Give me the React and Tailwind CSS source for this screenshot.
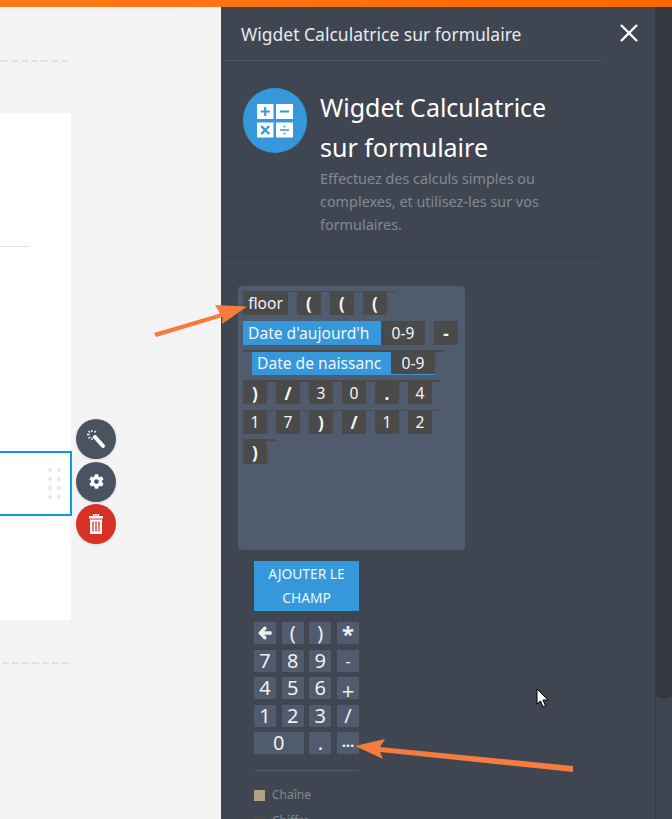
import { FaCog, FaArrowLeft } from "react-icons/fa";

function Dashes() {
  return (
    <div className="flex gap-[3px] pl-[1px]">
      {[0, 1, 2, 3, 4, 5, 6].map((i) => (
        <span key={i} className="h-[2px] w-[7px] bg-[#e2e2e2]" />
      ))}
    </div>
  );
}

function Token({ children, bold, w = "w-[24px]" }) {
  return (
    <span className={`mr-[9px] flex h-full items-center justify-center bg-[#4a4a4a] pt-px text-[#f5f5f5] ${w} ${bold ? "text-[17px] font-bold" : "text-[15.600px]"}`}>
      {children}
    </span>
  );
}

function FieldToken({ children, w }) {
  return (
    <span className={`flex h-full items-center bg-[#3498db] pt-px pl-[5px] text-[15.600px] whitespace-nowrap text-[#f5f5f5] ${w}`}>
      {children}
    </span>
  );
}

function Key({ children, wide, size = "text-[20px] leading-none" }) {
  return (
    <span className={`flex h-[22px] items-center justify-center bg-[#505b6d] text-[#f0f0f0] ${size} ${wide ? "col-span-2" : ""}`}>
      {children}
    </span>
  );
}

function CalcIcon() {
  return (
    <div className="flex h-[65px] w-[64px] shrink-0 items-center justify-center rounded-full bg-[#3498db]">
      <svg width="36" height="34" viewBox="0 0 36 34">
        <rect x="0" y="0" width="16.500" height="15" fill="#fff" />
        <rect x="19" y="0" width="17" height="15" fill="#fff" />
        <rect x="0" y="18.500" width="16.500" height="15" fill="#fff" />
        <rect x="19" y="18.500" width="17" height="15" fill="#fff" />
        <path d="M8.200 3v9M3.700 7.500h9M23 7.500h9" stroke="#3498db" strokeWidth="2" />
        <path d="M4.200 22l8 8M12.200 22l-8 8" stroke="#3498db" strokeWidth="2.400" />
        <path d="M23 26h9" stroke="#3498db" strokeWidth="1.500" />
        <circle cx="27.500" cy="22.500" r="1" fill="#3498db" />
        <circle cx="27.500" cy="29.500" r="1" fill="#3498db" />
      </svg>
    </div>
  );
}

function WandIcon() {
  return (
    <svg width="20" height="20" viewBox="0 0 20 20">
      <path d="M9 8l8 9" stroke="#fff" strokeWidth="4" strokeLinecap="round" />
      <path d="M6 1v2M1 5.500h2.500M2.500 2l1.500 1.500M10 2L8.500 3.500M2.500 9.500L4 8M6 8.500v2.500" stroke="#fff" strokeWidth="1.300" />
    </svg>
  );
}

function TrashIcon() {
  return (
    <svg width="14" height="20" viewBox="0 0 14 20">
      <path d="M4.500 2V.8h5V2" fill="none" stroke="#fff" strokeWidth="1.200" />
      <rect x="0" y="2" width="14" height="2.500" fill="#fff" />
      <path d="M1 5.500h12V20H1Z" fill="#fff" />
      <path d="M4 7.500v10M7 7.500v10M10 7.500v10" stroke="#d93025" strokeWidth="1.300" />
    </svg>
  );
}

export default function App() {
  return (
    <div className="relative flex h-[819px] w-[672px] flex-col overflow-hidden font-['Noto_Sans',sans-serif]">
      <div className="h-[7px] shrink-0 bg-gradient-to-r from-[#ff7a14] to-[#ff6600]" />
      <div className="flex min-h-0 flex-1">
        {/* canvas du formulaire */}
        <div className="w-[221px] shrink-0 bg-[#f4f4f4] pt-[53px]">
          <Dashes />
          <div className="relative mt-[51px] h-[507px] w-[71px] bg-white pt-[133px]">
            <div className="h-px w-[30px] bg-[#e4e4e4]" />
            <div className="mt-[204px] flex h-[65px] w-[72px] items-center justify-end border-y-2 border-r-2 border-[#0a9be8] pr-[9px]">
              <div className="grid grid-cols-2 gap-x-[5px] gap-y-[5px]">
                {[0, 1, 2, 3, 4, 5, 6, 7].map((i) => (
                  <span key={i} className="size-[4px] rounded-full bg-[#e8e8e8]" />
                ))}
              </div>
            </div>
            <div className="absolute top-[306px] left-[76px] flex flex-col gap-[2.500px]">
              <span className="flex size-[40px] items-center justify-center rounded-full bg-[#4a5460] text-white shadow-sm"><WandIcon /></span>
              <span className="flex size-[40px] items-center justify-center rounded-full bg-[#4a5460] text-[15px] text-white shadow-sm"><FaCog /></span>
              <span className="flex size-[40px] items-center justify-center rounded-full bg-[#d93025] text-white shadow-sm"><TrashIcon /></span>
            </div>
          </div>
          <div className="mt-[42px] pl-[1px]">
            <Dashes />
          </div>
        </div>

        {/* panneau du widget */}
        <div className="relative flex min-w-0 flex-1 bg-[#3f4651]">
          <div className="w-[381px] shrink-0">
            <div className="flex h-[54px] items-center border-b border-[#4a5866] pt-[2px] pl-[20px] text-[17.500px] text-[#e8eaec]">
              Wigdet Calculatrice sur formulaire
            </div>
            <div className="flex h-[197px] gap-[13px] border-b border-[#353b44] pt-[27px] pl-[22px]">
              <CalcIcon />
              <div>
                <h1 className="text-[25px] leading-[39.500px] font-normal text-white">Wigdet Calculatrice<br />sur formulaire</h1>
                <p className="text-[14.400px] leading-[23px] text-[#808996]">
                  Effectuez des calculs simples ou<br />complexes, et utilisez-les sur vos<br />formulaires.
                </p>
              </div>
            </div>
            <div className="mt-[28px] ml-[17px] h-[264px] w-[227px] rounded-[4px] bg-[#505b6d] pt-px pl-[5px]">
              <div className="mt-[4px] flex h-[24px] w-fit border-t border-[#4a4a4a]">
                <Token w="w-[45px]">floor</Token>
                <Token bold>(</Token>
                <Token bold>(</Token>
                <Token bold>(</Token>
              </div>
              <div className="mt-[6px] flex h-[24px] w-fit">
                <FieldToken w="w-[138px]">Date d'aujourd'h</FieldToken>
                <Token w="w-[44px]">0-9</Token>
                <Token bold>-</Token>
              </div>
              <div className="mt-[5px] flex h-[25px] w-fit border-t-2 border-[#4a4a4a] pl-[9px]">
                <FieldToken w="w-[139px]">Date de naissanc</FieldToken>
                <span className="mr-[9px] border-b border-[#3498db]">
                  <Token w="w-[44px] !mr-0">0-9</Token>
                </span>
              </div>
              <div className="mt-[5px] flex h-[24px] w-fit border-t-2 border-[#4a4a4a]">
                <Token bold>)</Token>
                <Token bold>/</Token>
                <Token>3</Token>
                <Token>0</Token>
                <Token bold>.</Token>
                <Token>4</Token>
              </div>
              <div className="mt-[6px] flex h-[24px] w-fit border-t border-[#4a4a4a]">
                <Token>1</Token>
                <Token>7</Token>
                <Token bold>)</Token>
                <Token bold>/</Token>
                <Token>1</Token>
                <Token>2</Token>
              </div>
              <div className="mt-[5px] flex h-[25px] w-fit border-t-2 border-[#4a4a4a]">
                <Token bold>)</Token>
              </div>
            </div>
            <div className="mt-[11px] ml-[33px] w-[105px]">
              <div className="bg-[#3498db] py-[1px] text-center text-[13.800px] leading-[24px] text-[#f0f6fb]">
                AJOUTER LE<br />CHAMP
              </div>
              <div className="mt-[11px] grid grid-cols-[22px_22px_22px_22px] justify-between gap-y-[5.500px]">
                <Key><FaArrowLeft className="text-[14px]" strokeWidth={40} /></Key>
                <Key>(</Key>
                <Key>)</Key>
                <Key size="text-[22px] leading-none font-bold">*</Key>
                <Key>7</Key>
                <Key>8</Key>
                <Key>9</Key>
                <Key size="text-[16px] leading-none">-</Key>
                <Key>4</Key>
                <Key>5</Key>
                <Key>6</Key>
                <Key size="text-[22px] leading-[17px] pt-[5px]">+</Key>
                <Key>1</Key>
                <Key>2</Key>
                <Key>3</Key>
                <Key>/</Key>
                <Key wide>0</Key>
                <Key>.</Key>
                <Key size="text-[15px] leading-none font-bold pb-[4px]">...</Key>
              </div>
              <div className="mt-[16px] h-px bg-[#505b6d]" />
              <div className="mt-[15px] flex items-center gap-[7px] text-[12px] text-[#7f8894]">
                <span className="size-[11px] bg-[#b5a182]" />
                Chaîne
              </div>
              <div className="mt-[8px] flex items-center gap-[7px] text-[12px] text-[#7f8894]">
                <span className="size-[11px] bg-[#4a4a4a]" />
                Chiffre
              </div>
            </div>
          </div>

          <div className="flex flex-1 justify-center pt-[16px] pl-[1px]">
            <svg width="20" height="20" viewBox="0 0 20 20">
              <path d="M2 2l16 16M18 2L2 18" stroke="#fff" strokeWidth="2.400" />
            </svg>
          </div>

          <div className="w-[17px] shrink-0 border-l border-[#353b44]">
            <div className="h-[691px] rounded-b-[6px] bg-[#33383f]" />
          </div>
        </div>
      </div>

      {/* annotations par-dessus la capture */}
      <svg className="pointer-events-none absolute top-0 left-0" width="672" height="819" viewBox="0 0 672 819">
        <path d="M154 333L220 313.500L215 305L247 306.500L222 324L222.500 317L156 337Z" fill="#f57c3d" />
        <path d="M573 766L380 747L385 739L355 746L383 759L380 752L573 772Z" fill="#f57c3d" />
        <path d="M537 689v15l3.500-3 2.500 6 2.500-1-2.500-6h5Z" fill="#fff" stroke="#000" strokeWidth="1" />
      </svg>
    </div>
  );
}
